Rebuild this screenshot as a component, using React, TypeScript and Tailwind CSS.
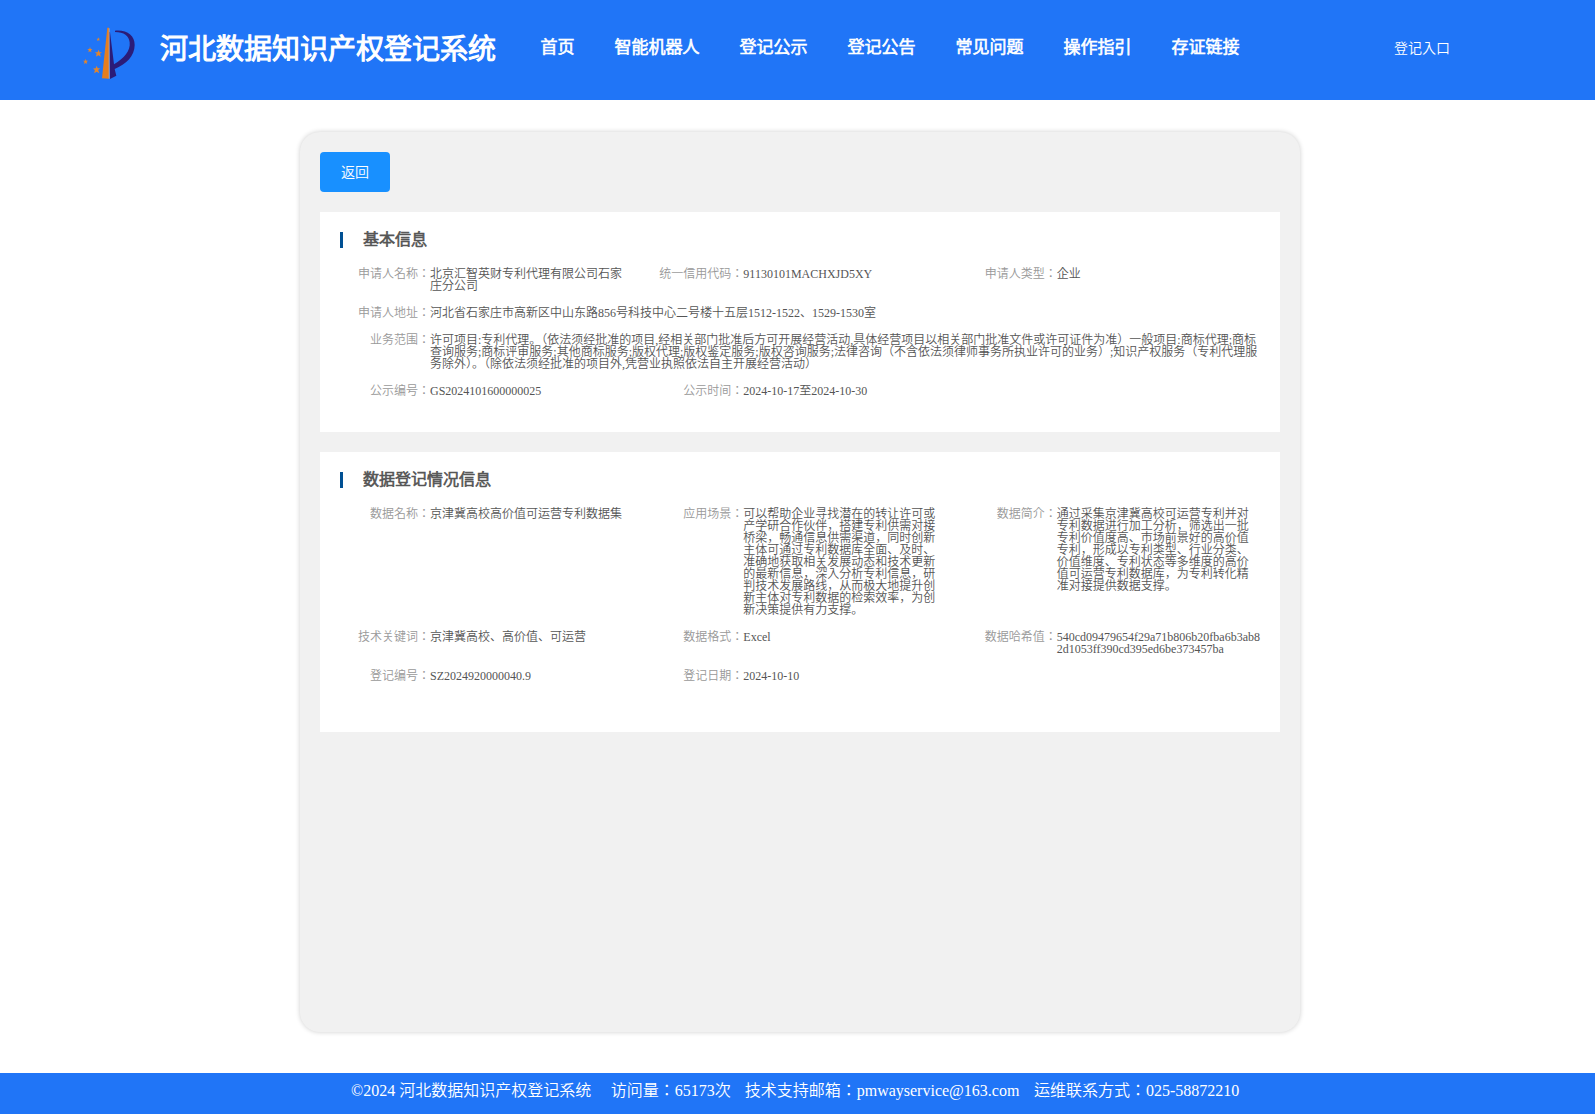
import type { ReactNode } from 'react';

const navItems = ['首页', '智能机器人', '登记公示', '登记公告', '常见问题', '操作指引', '存证链接'];

function Logo() {
  return (
    <svg viewBox="0 0 240 225" className="w-20 h-[75px] mt-[15px] shrink-0">
      <path d="M112 38 L117 38 L117 191 L96 190 Z" fill="#e67e1e" />
      <path d="M117 50 L120 52 L132 148 C162 130 182 108 179 82 C177 62 162 51 135 51 L135 47 C172 44 194 62 194 90 C194 124 168 148 134 162 L139 182 L120 192 Z" fill="#2b1c78" />
      <path d="M117.500 40 V191" stroke="#a9a9c0" strokeWidth="2.500" />
      <g fill="#e0852f">
        <path d="M86 104 l2.500 7.500 7.500 0 -6 5 2.500 8.500 -7 -4.500 -7.500 4 2 -8 -5.500 -5 8 0 Z" />
        <path d="M80 152 l3 8 7.500 0 -6 5 3.500 9.500 -8 -4.500 -7.500 5 2 -9.500 -5.500 -5 8 -0.500 Z" />
        <path d="M60 96 l2 6 5.500 0 -4.500 3.500 1.500 6 -4.500 -3 -5 3 1.500 -6 -4.500 -3.500 6 0 Z" />
        <path d="M47 131 l2 6 5 0 -4 4 1.500 6 -4.500 -3 -5 3 1.500 -6 -4.500 -4 6 0 Z" />
        <path d="M85 67 l1.500 4.500 3.500 0 -3 2.500 1.500 4 -3.500 -2 -4 2 1.500 -4 -3 -2.500 4 0 Z" />
      </g>
    </svg>
  );
}

type FieldProps = { label: string; children: ReactNode; wide?: boolean };

function Field({ label, children, wide }: FieldProps) {
  return (
    <div className={wide ? 'flex col-span-3 pr-5' : 'flex pr-5'}>
      <div className="w-[90px] shrink-0 text-right text-[#999]">{label}：</div>
      <div className="flex-1 min-w-0 break-all text-[#555]">{children}</div>
    </div>
  );
}

type SectionProps = { title: string; className: string; children: ReactNode };

function Section({ title, className, children }: SectionProps) {
  return (
    <section className={`bg-white pl-5 pt-5 mt-5 ${className}`}>
      <h2 className="h-4 border-l-3 border-[#005093] pl-5 text-base leading-[16px] font-[350] text-[#555] [-webkit-text-stroke:0.65px_#555]">{title}</h2>
      <div className="grid grid-cols-3 gap-y-[15px] mt-5 text-xs leading-[12px]">{children}</div>
    </section>
  );
}

export default function App() {
  return (
    <div className="h-[1114px] overflow-hidden bg-white font-[350] font-['Liberation_Serif','Noto_Sans_CJK_JP',serif]">
      <div className="w-[1600px] h-full flex flex-col">
        <header className="h-[100px] shrink-0 flex items-start bg-[#2075f7] text-white">
          <div className="w-[70px] shrink-0" />
          <Logo />
          <h1 className="ml-[10px] mt-[30px] w-[340px] text-[28px] leading-[40px] font-[350] whitespace-nowrap [-webkit-text-stroke:1.15px_white]">河北数据知识产权登记系统</h1>
          <nav className="flex gap-10 ml-[40.5px] mt-[35px] text-[17px] leading-[25px] whitespace-nowrap [-webkit-text-stroke:0.7px_white]">
            {navItems.map((item) => (
              <a key={item}>{item}</a>
            ))}
          </nav>
          <a className="ml-auto mr-[150px] mt-[39px] text-sm leading-[20px]">登记入口</a>
        </header>

        <main className="w-[1000px] h-[900px] shrink-0 mx-auto mt-8 p-5 rounded-[20px] bg-[#f1f1f1] shadow-[0_0_5px_rgba(0,0,0,0.2)]">
          <button className="block w-[70px] h-10 pt-0.5 rounded bg-[#1890ff] text-sm text-white">返回</button>

          <Section title="基本信息" className="h-[220px]">
            <Field label="申请人名称">北京汇智英财专利代理有限公司石家庄分公司</Field>
            <Field label="统一信用代码">91130101MACHXJD5XY</Field>
            <Field label="申请人类型">企业</Field>
            <Field label="申请人地址" wide>河北省石家庄市高新区中山东路856号科技中心二号楼十五层1512-1522、1529-1530室</Field>
            <Field label="业务范围" wide>
              许可项目:专利代理。（依法须经批准的项目,经相关部门批准后方可开展经营活动,具体经营项目以相关部门批准文件或许可证件为准）一般项目:商标代理;商标查询服务;商标评审服务;其他商标服务;版权代理;版权鉴定服务;版权咨询服务;法律咨询（不含依法须律师事务所执业许可的业务）;知识产权服务（专利代理服务除外）。（除依法须经批准的项目外,凭营业执照依法自主开展经营活动）
            </Field>
            <Field label="公示编号">GS2024101600000025</Field>
            <Field label="公示时间">2024-10-17至2024-10-30</Field>
          </Section>

          <Section title="数据登记情况信息" className="h-[280px]">
            <Field label="数据名称">京津冀高校高价值可运营专利数据集</Field>
            <Field label="应用场景">
              可以帮助企业寻找潜在的转让许可或产学研合作伙伴，搭建专利供需对接桥梁，畅通信息供需渠道，同时创新主体可通过专利数据库全面、及时、准确地获取相关发展动态和技术更新的最新信息，深入分析专利信息，研判技术发展路线，从而极大地提升创新主体对专利数据的检索效率，为创新决策提供有力支撑。
            </Field>
            <Field label="数据简介">
              通过采集京津冀高校可运营专利并对专利数据进行加工分析，筛选出一批专利价值度高、市场前景好的高价值专利，形成以专利类型、行业分类、价值维度、专利状态等多维度的高价值可运营专利数据库，为专利转化精准对接提供数据支撑。
            </Field>
            <Field label="技术关键词">京津冀高校、高价值、可运营</Field>
            <Field label="数据格式">Excel</Field>
            <Field label="数据哈希值">540cd09479654f29a71b806b20fba6b3ab82d1053ff390cd395ed6be373457ba</Field>
            <Field label="登记编号">SZ2024920000040.9</Field>
            <Field label="登记日期">2024-10-10</Field>
          </Section>
        </main>

        <footer className="flex-1 mt-[41px] flex items-start bg-[#2075f7] pl-[351px] pt-1.5 text-base leading-[24px] text-white whitespace-nowrap">
          <span>©2024 河北数据知识产权登记系统</span>
          <span className="ml-[19.5px]">访问量：65173次</span>
          <span className="ml-[14px]">技术支持邮箱：pmwayservice@163.com</span>
          <span className="ml-[14.5px]">运维联系方式：025-58872210</span>
        </footer>
      </div>
    </div>
  );
}
